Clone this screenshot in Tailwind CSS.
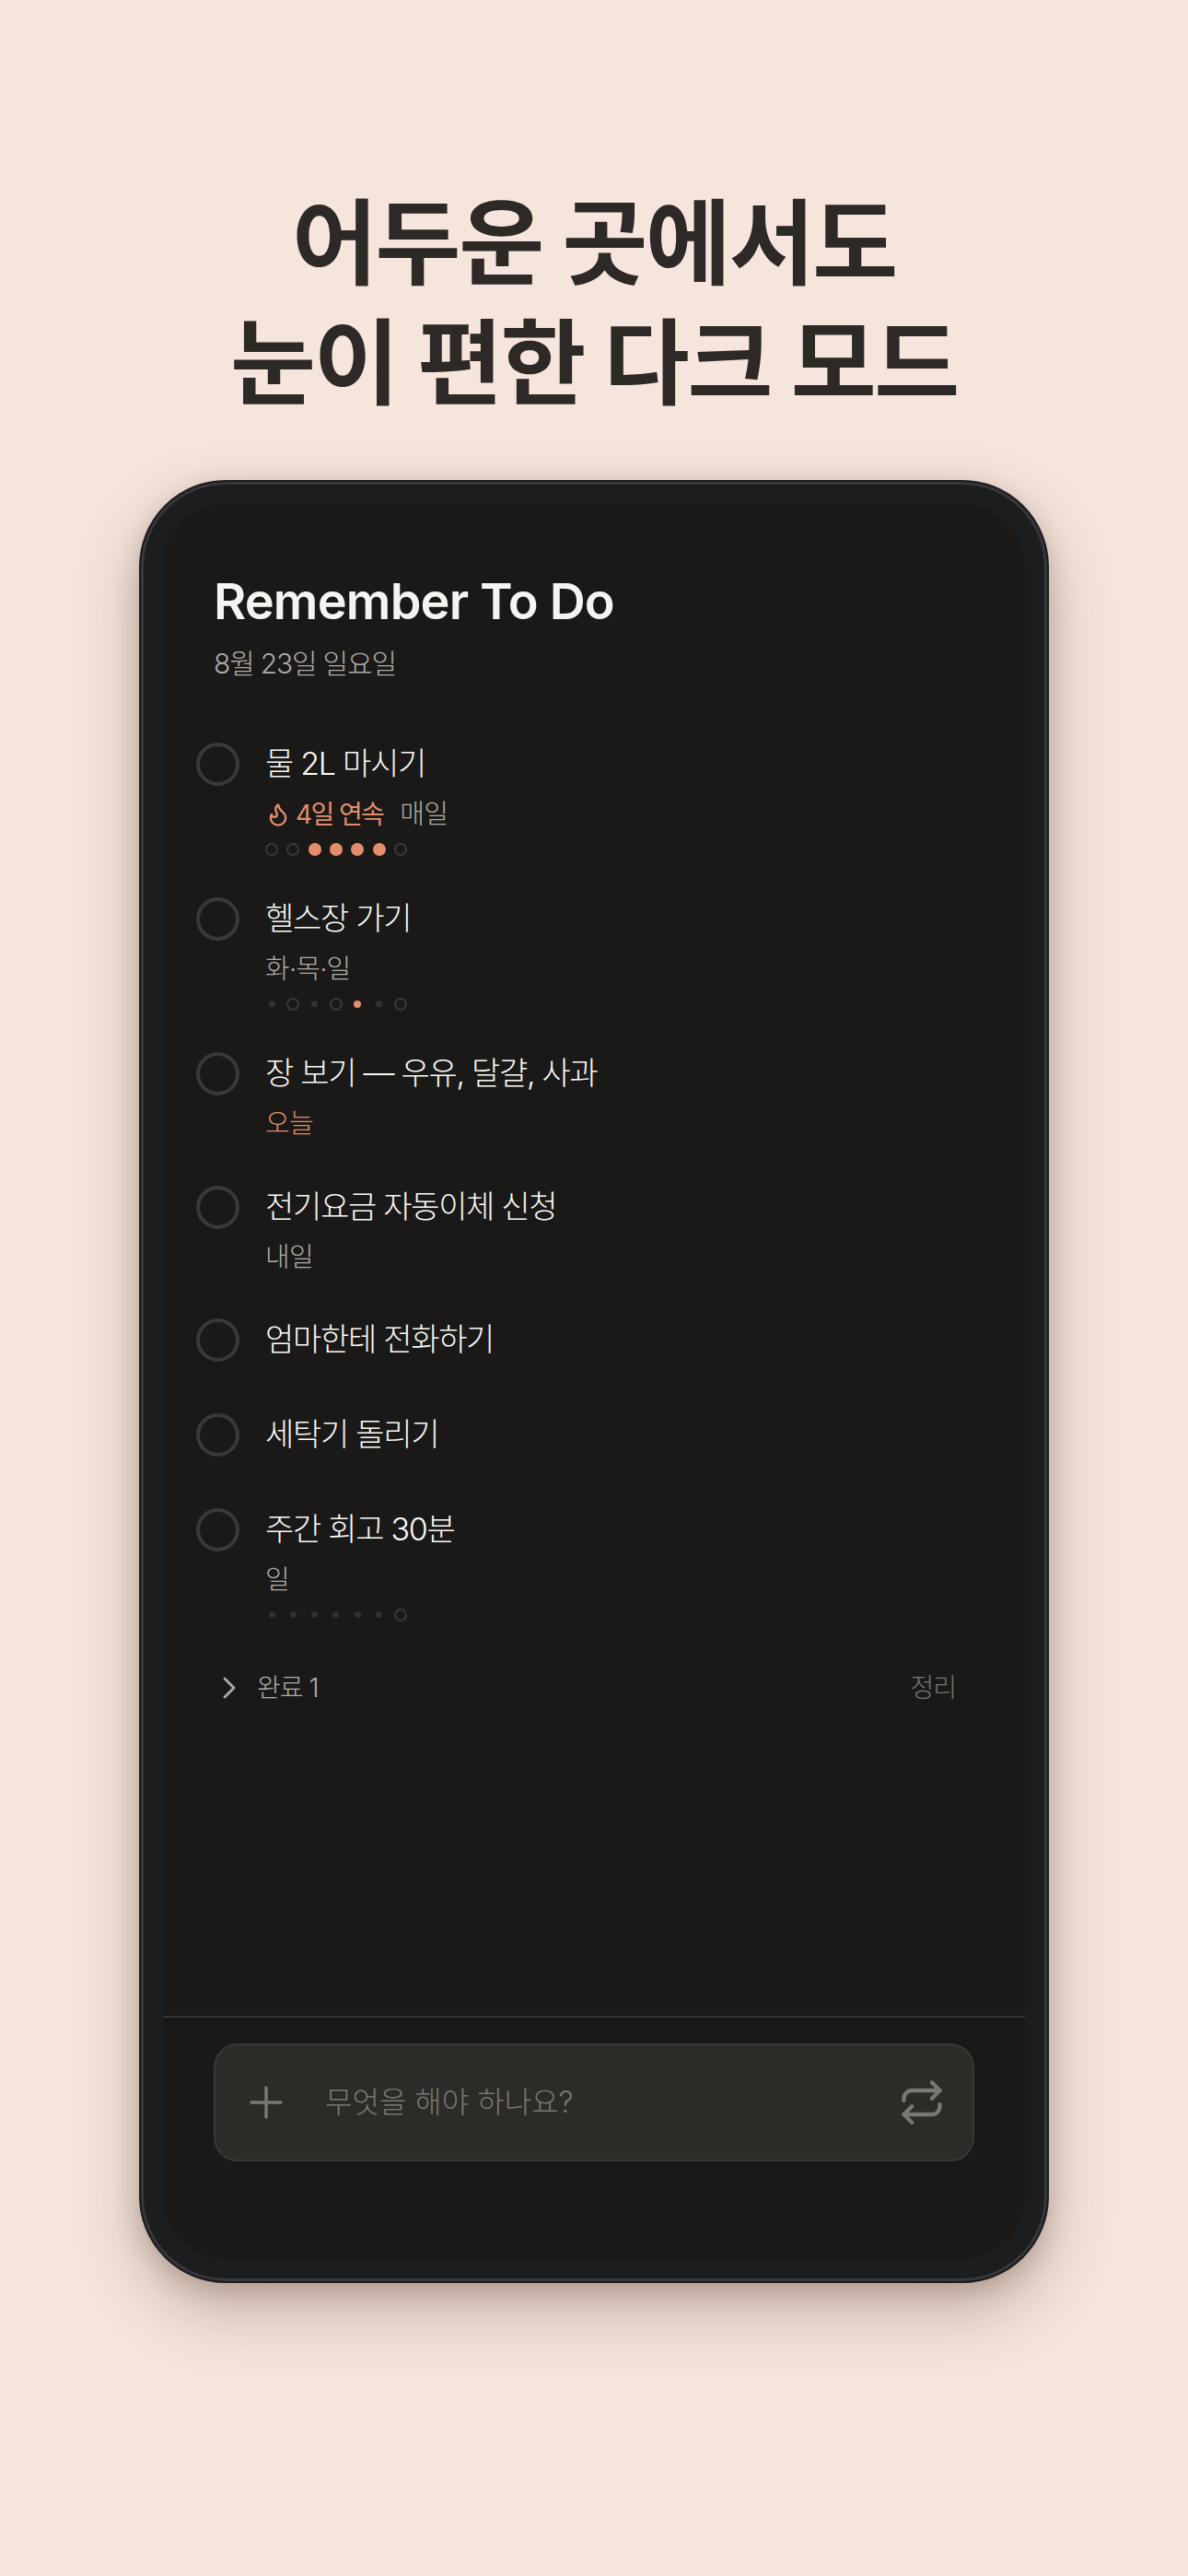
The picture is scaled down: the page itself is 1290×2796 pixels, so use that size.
<!DOCTYPE html>
<html lang="ko">
  <head>
    <meta charset="UTF-8" />
    <meta name="viewport" content="width=device-width, initial-scale=1.0" />
    <script src="https://cdn.jsdelivr.net/npm/@tailwindcss/browser@4"></script>
    <title>Remember To Do</title>
  </head>
  <body class="w-[1290px] h-[2796px] overflow-hidden bg-[#f6e5dd] font-['Inter','Noto_Sans_CJK_KR',sans-serif]">
    <div class="flex flex-col items-center pt-[199px]">
      <h1 class="text-center text-[101px] leading-[130px] font-bold tracking-[-2.3px] text-[#2d2926] font-['Inter','Noto_Sans_CJK_KR',sans-serif]">
        어두운 곳에서도<br />눈이 편한 다크 모드
      </h1>

      <!-- phone -->
      <div class="mt-[62px] w-[988px] h-[1957px] rounded-[94px] bg-[#1c1d1f] border-2 border-[#1c1c1e] p-[24px] shadow-[inset_0_0_0_3px_#38383c,0_30px_70px_rgba(70,40,25,0.28),0_8px_28px_rgba(70,40,25,0.2)]">
        <div class="flex flex-col w-[936px] h-[1905px] rounded-[70px] bg-[#1a1918] overflow-hidden">
          <div class="flex-1">
            <div class="pl-[55px] pt-[73px]">
              <div class="text-[54px] leading-[66px] font-semibold tracking-[-0.8px] text-[#f5f4f0]">Remember To Do</div>
              <div class="mt-[14px] text-[30px] leading-[40px] font-light tracking-[-1.2px] text-[#b0ada7]">8월 23일 일요일</div>
            </div>

            <div class="mt-[38px] pl-[36px]">
              <!-- task: water -->
              <div class="flex gap-[28px] pt-[27px] pb-[13px]">
                <div class="mt-[1px] w-[47px] h-[47px] rounded-full border-[4px] border-[#3b3936]"></div>
                <div>
                  <div class="text-[34px] leading-[47px] font-light tracking-[-1.3px] text-[#fbfaf7]">물 2L 마시기</div>
                  <div class="flex items-center mt-[9px] h-[45px] text-[29px] font-light tracking-[-0.8px]">
                    <svg class="mr-[5px] w-[28px] h-[28px] text-[#e38d6d]" viewBox="0 0 24 24" fill="none" stroke="currentColor" stroke-width="2" stroke-linecap="round" stroke-linejoin="round"><path d="M8.5 14.5A2.5 2.5 0 0 0 11 12c0-1.38-.5-2-1-3-1.072-2.143-.224-4.054 2-6 .5 2.5 2 4.9 4 6.5 2 1.6 3 3.5 3 5.5a7 7 0 1 1-14 0c0-1.153.433-2.294 1-3a2.5 2.5 0 0 0 2.5 2.5z" /></svg>
                    <span class="text-[28px] font-normal tracking-[-1.6px] text-[#e38d6d]">4일 연속</span>
                    <span class="ml-[18px] text-[#b0ada7]">매일</span>
                  </div>
                  <div class="flex items-center gap-[9.33px] mt-[4px] h-[23px]">
                    <span class="w-[14px] h-[14px] rounded-full border-[2.5px] border-[#3b3936]"></span>
                    <span class="w-[14px] h-[14px] rounded-full border-[2.5px] border-[#3b3936]"></span>
                    <span class="w-[14px] h-[14px] rounded-full bg-[#e38d6d]"></span>
                    <span class="w-[14px] h-[14px] rounded-full bg-[#e38d6d]"></span>
                    <span class="w-[14px] h-[14px] rounded-full bg-[#e38d6d]"></span>
                    <span class="w-[14px] h-[14px] rounded-full bg-[#e38d6d]"></span>
                    <span class="w-[14px] h-[14px] rounded-full border-[2.5px] border-[#3b3936]"></span>
                  </div>
                </div>
              </div>

              <!-- task: gym -->
              <div class="flex gap-[28px] pt-[27px] pb-[13px]">
                <div class="mt-[1px] w-[47px] h-[47px] rounded-full border-[4px] border-[#3b3936]"></div>
                <div>
                  <div class="text-[34px] leading-[47px] font-light tracking-[-1.3px] text-[#fbfaf7]">헬스장 가기</div>
                  <div class="flex items-center mt-[9px] h-[45px] text-[29px] font-light tracking-[-0.8px] text-[#b0ada7]">화·목·일</div>
                  <div class="flex items-center gap-[9.33px] mt-[4px] h-[23px]">
                    <span class="w-[14px] h-[14px] flex items-center justify-center"><span class="w-[7px] h-[7px] rounded-full bg-[#333130]"></span></span>
                    <span class="w-[14px] h-[14px] rounded-full border-[2.5px] border-[#3b3936]"></span>
                    <span class="w-[14px] h-[14px] flex items-center justify-center"><span class="w-[7px] h-[7px] rounded-full bg-[#333130]"></span></span>
                    <span class="w-[14px] h-[14px] rounded-full border-[2.5px] border-[#3b3936]"></span>
                    <span class="w-[14px] h-[14px] flex items-center justify-center"><span class="w-[8px] h-[8px] rounded-full bg-[#e38d6d]"></span></span>
                    <span class="w-[14px] h-[14px] flex items-center justify-center"><span class="w-[7px] h-[7px] rounded-full bg-[#333130]"></span></span>
                    <span class="w-[14px] h-[14px] rounded-full border-[2.5px] border-[#3b3936]"></span>
                  </div>
                </div>
              </div>

              <!-- task: groceries -->
              <div class="flex gap-[28px] pt-[27px] pb-[17px]">
                <div class="mt-[1px] w-[47px] h-[47px] rounded-full border-[4px] border-[#3b3936]"></div>
                <div>
                  <div class="text-[34px] leading-[47px] font-light tracking-[-1.3px] text-[#fbfaf7]">장 보기 — 우유, 달걀, 사과</div>
                  <div class="flex items-center mt-[9px] h-[45px] text-[29px] font-light tracking-[-0.8px] text-[#e38d6d]">오늘</div>
                </div>
              </div>

              <!-- task: bill -->
              <div class="flex gap-[28px] pt-[27px] pb-[16px]">
                <div class="mt-[1px] w-[47px] h-[47px] rounded-full border-[4px] border-[#3b3936]"></div>
                <div>
                  <div class="text-[34px] leading-[47px] font-light tracking-[-1.3px] text-[#fbfaf7]">전기요금 자동이체 신청</div>
                  <div class="flex items-center mt-[9px] h-[45px] text-[29px] font-light tracking-[-0.8px] text-[#b0ada7]">내일</div>
                </div>
              </div>

              <div class="flex gap-[28px] pt-[27px] pb-[28px]">
                <div class="mt-[1px] w-[47px] h-[47px] rounded-full border-[4px] border-[#3b3936]"></div>
                <div class="text-[34px] leading-[47px] font-light tracking-[-1.3px] text-[#fbfaf7]">엄마한테 전화하기</div>
              </div>

              <div class="flex gap-[28px] pt-[27px] pb-[28px]">
                <div class="mt-[1px] w-[47px] h-[47px] rounded-full border-[4px] border-[#3b3936]"></div>
                <div class="text-[34px] leading-[47px] font-light tracking-[-1.3px] text-[#fbfaf7]">세탁기 돌리기</div>
              </div>

              <!-- task: review -->
              <div class="flex gap-[28px] pt-[27px] pb-[13px]">
                <div class="mt-[1px] w-[47px] h-[47px] rounded-full border-[4px] border-[#3b3936]"></div>
                <div>
                  <div class="text-[34px] leading-[47px] font-light tracking-[-1.3px] text-[#fbfaf7]">주간 회고 30분</div>
                  <div class="flex items-center mt-[9px] h-[45px] text-[29px] font-light tracking-[-0.8px] text-[#b0ada7]">일</div>
                  <div class="flex items-center gap-[9.33px] mt-[4px] h-[23px]">
                    <span class="w-[14px] h-[14px] flex items-center justify-center"><span class="w-[7px] h-[7px] rounded-full bg-[#333130]"></span></span>
                    <span class="w-[14px] h-[14px] flex items-center justify-center"><span class="w-[7px] h-[7px] rounded-full bg-[#333130]"></span></span>
                    <span class="w-[14px] h-[14px] flex items-center justify-center"><span class="w-[7px] h-[7px] rounded-full bg-[#333130]"></span></span>
                    <span class="w-[14px] h-[14px] flex items-center justify-center"><span class="w-[7px] h-[7px] rounded-full bg-[#333130]"></span></span>
                    <span class="w-[14px] h-[14px] flex items-center justify-center"><span class="w-[7px] h-[7px] rounded-full bg-[#333130]"></span></span>
                    <span class="w-[14px] h-[14px] flex items-center justify-center"><span class="w-[7px] h-[7px] rounded-full bg-[#333130]"></span></span>
                    <span class="w-[14px] h-[14px] rounded-full border-[2.5px] border-[#3b3936]"></span>
                  </div>
                </div>
              </div>
            </div>

            <!-- completed -->
            <div class="flex items-center justify-between mt-[31px] pl-[62px] pr-[75px] h-[48px] text-[28px] font-light tracking-[-1px]">
              <div class="flex items-center text-[#b0ada7]">
                <svg class="w-[22px] h-[26px] mr-[18px]" viewBox="0 0 22 26" fill="none" stroke="currentColor" stroke-width="2.8" stroke-linecap="round" stroke-linejoin="round"><path d="M5 3l10 10L5 23" /></svg>
                <span>완료 1</span>
              </div>
              <span class="text-[#7a7772]">정리</span>
            </div>
          </div>

          <!-- input bar -->
          <div class="h-[264px] border-t-2 border-[#35322e] px-[55px] pt-[28px]">
            <div class="flex items-center h-[128px] rounded-[26px] border-2 border-[#3a3834] bg-[#2d2b27] pl-[37px] pr-[29px]">
              <svg class="w-[36px] h-[36px] text-[#7a7772]" viewBox="0 0 36 36" fill="none" stroke="currentColor" stroke-width="3.5" stroke-linecap="round"><path d="M2 18h32M18 2v32" /></svg>
              <span class="ml-[46px] flex-1 text-[32px] font-light text-[#7a7772]">무엇을 해야 하나요?</span>
              <svg class="w-[52px] h-[52px] text-[#7a7772]" viewBox="0 0 24 24" fill="none" stroke="currentColor" stroke-width="2" stroke-linecap="round" stroke-linejoin="round"><path d="m17 2 4 4-4 4" /><path d="M3 11v-1a4 4 0 0 1 4-4h14" /><path d="m7 22-4-4 4-4" /><path d="M21 13v1a4 4 0 0 1-4 4H3" /></svg>
            </div>
          </div>
        </div>
      </div>
    </div>
  </body>
</html>
